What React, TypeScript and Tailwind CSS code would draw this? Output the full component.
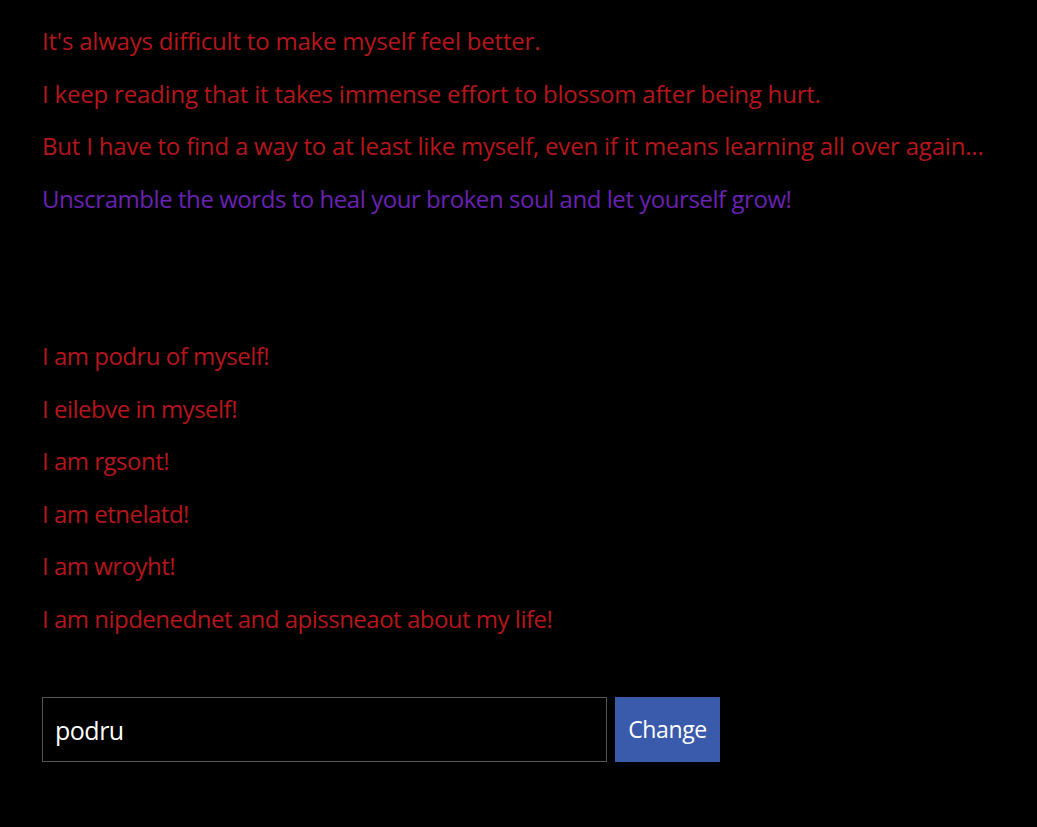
import { useState } from 'react';

const intro = [
    "It's always difficult to make myself feel better.",
    'I keep reading that it takes immense effort to blossom after being hurt.',
    'But I have to find a way to at least like myself, even if it means learning all over again...',
];

const affirmations = [
    'I am podru of myself!',
    'I eilebve in myself!',
    'I am rgsont!',
    'I am etnelatd!',
    'I am wroyht!',
    'I am nipdenednet and apissneaot about my life!',
];

export default function App() {
    const [word, setWord] = useState('podru');

    return (
        <div className="min-h-[827px] bg-black pl-[42px] pt-[15px] font-['Open_Sans',sans-serif] text-[24px] leading-[52.5px] tracking-[-0.2px]">
            {intro.map(line => (
                <p key={line} className="text-[#b5161b]">{line}</p>
            ))}
            <p className="tracking-[-0.45px] text-[#6a22b4]">Unscramble the words to heal your broken soul and let yourself grow!</p>

            <div className="h-[105px]" />

            {affirmations.map(line => (
                <p key={line} className="tracking-[-0.5px] text-[#b5161b]">{line}</p>
            ))}

            {/* Input row */}
            <div className="mt-[52px] flex items-center gap-[8px]">
                <input
                    value={word}
                    onChange={e => setWord(e.target.value)}
                    className="h-[65px] w-[565px] border border-[#555] bg-black px-[12px] text-[25px] font-medium tracking-[-0.5px] text-white outline-none"
                />
                <button className="h-[65px] w-[105px] bg-[#3a5aab] text-[23px] font-medium tracking-[-0.4px] text-white">
                    Change
                </button>
            </div>
        </div>
    );
}
